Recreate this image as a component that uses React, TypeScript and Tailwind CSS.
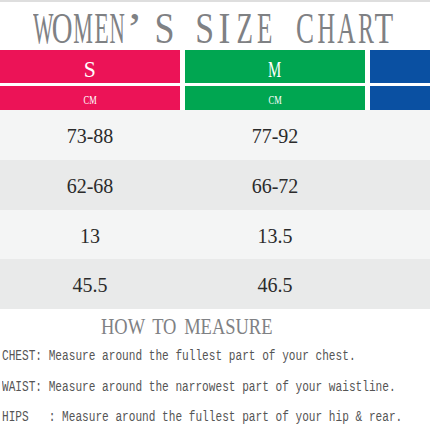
import React from "react";

type G = { ch: string; ml: string; w: string; s: string };

const title: G[] = [
  { ch: "W", ml: "ml-0", w: "w-[20px]", s: "scale-x-[0.48]" },
  { ch: "O", ml: "ml-0", w: "w-[19px]", s: "scale-x-[0.64]" },
  { ch: "M", ml: "ml-[1px]", w: "w-[19px]", s: "scale-x-[0.49]" },
  { ch: "E", ml: "ml-[3px]", w: "w-[13px]", s: "scale-x-[0.52]" },
  { ch: "N", ml: "ml-[2px]", w: "w-[15px]", s: "scale-x-[0.47]" },
  { ch: "’", ml: "ml-[7px]", w: "w-[5px]", s: "scale-x-[1.1]" },
  { ch: "S", ml: "ml-[20px]", w: "w-[16px]", s: "scale-x-[0.8]" },
  { ch: "S", ml: "ml-[24px]", w: "w-[15px]", s: "scale-x-[0.75]" },
  { ch: "I", ml: "ml-[7px]", w: "w-[11px]", s: "scale-x-[0.79]" },
  { ch: "Z", ml: "ml-[7px]", w: "w-[15px]", s: "scale-x-[0.6]" },
  { ch: "E", ml: "ml-[6px]", w: "w-[14px]", s: "scale-x-[0.56]" },
  { ch: "C", ml: "ml-[25px]", w: "w-[16px]", s: "scale-x-[0.6]" },
  { ch: "H", ml: "ml-[5px]", w: "w-[17px]", s: "scale-x-[0.54]" },
  { ch: "A", ml: "ml-[2px]", w: "w-[18px]", s: "scale-x-[0.56]" },
  { ch: "R", ml: "ml-[3px]", w: "w-[15px]", s: "scale-x-[0.52]" },
  { ch: "T", ml: "ml-[2px]", w: "w-[17px]", s: "scale-x-[0.68]" },
];

const rows: { a: string; b: string; bg: string }[] = [
  { a: "73-88", b: "77-92", bg: "bg-[#f4f5f5] h-[50px]" },
  { a: "62-68", b: "66-72", bg: "bg-[#e9eaea] h-[50px]" },
  { a: "13", b: "13.5", bg: "bg-[#f4f5f5] h-[49px]" },
  { a: "45.5", b: "46.5", bg: "bg-[#e9eaea] h-[50px]" },
];

const lines = [
  "CHEST: Measure around the fullest part of your chest.",
  "WAIST: Measure around the narrowest part of your waistline.",
  "HIPS   : Measure around the fullest part of your hip & rear.",
];

export default function App() {
  return (
    <div className="w-[430px] h-[430px] overflow-hidden bg-white font-['Liberation_Serif',serif]">
      <div className="h-[2px] bg-[#dedede]" />
      {/* Title */}
      <div className="h-[48px] pt-[3px]">
        <div className="flex pl-[33px] text-[45px] leading-[46px] text-[#7f8184]">
          {title.map((g, i) => (
            <span key={i} className={`flex justify-center ${g.ml} ${g.w}`}>
              <span className={`inline-block ${g.s}`}>{g.ch}</span>
            </span>
          ))}
        </div>
      </div>

      {/* Header */}
      <div className="grid grid-cols-[180px_180px_1fr] grid-rows-[33px_24px] gap-x-[5px] gap-y-[3px] text-white">
        <div className="flex justify-center bg-[#ec1357] text-[24px] leading-[39px] overflow-hidden">
          <span className="inline-block scale-x-[0.9]">S</span>
        </div>
        <div className="flex justify-center bg-[#00a651] text-[24px] leading-[39px] overflow-hidden">
          <span className="inline-block scale-x-[0.62]">M</span>
        </div>
        <div className="bg-[#0a50a2]" />
        <div className="flex justify-center bg-[#ec1357] text-[13px] leading-[28px] overflow-hidden">
          <span className="inline-block scale-x-[0.65]">CM</span>
        </div>
        <div className="flex justify-center bg-[#00a651] text-[13px] leading-[28px] overflow-hidden">
          <span className="inline-block scale-x-[0.65]">CM</span>
        </div>
        <div className="bg-[#0a50a2]" />
      </div>

      {/* Data rows */}
      <div className="flex flex-col text-[20px] text-[#2b2b2b]">
        {rows.map((r, i) => (
          <div key={i} className={`grid grid-cols-[180px_5px_180px] ${r.bg} leading-[52px] overflow-hidden`}>
            <div className="text-center">{r.a}</div>
            <div />
            <div className="text-center">{r.b}</div>
          </div>
        ))}
      </div>

      {/* How to measure */}
      <div className="pt-[5px]">
        <div className="pl-[101px] text-[24px] leading-[24px] text-[#7f8184] whitespace-nowrap">
          <span className="inline-block origin-left scale-x-[0.77] [word-spacing:4px]">HOW TO MEASURE</span>
        </div>
        <div className="mt-[3px] pl-[2px] font-['Liberation_Mono',monospace] text-[14px] leading-[30.5px] text-[#555555]">
          {lines.map((l, i) => (
            <div key={i} className="whitespace-pre">
              <span className="inline-block origin-left scale-x-[0.794]">{l}</span>
            </div>
          ))}
        </div>
      </div>
    </div>
  );
}
